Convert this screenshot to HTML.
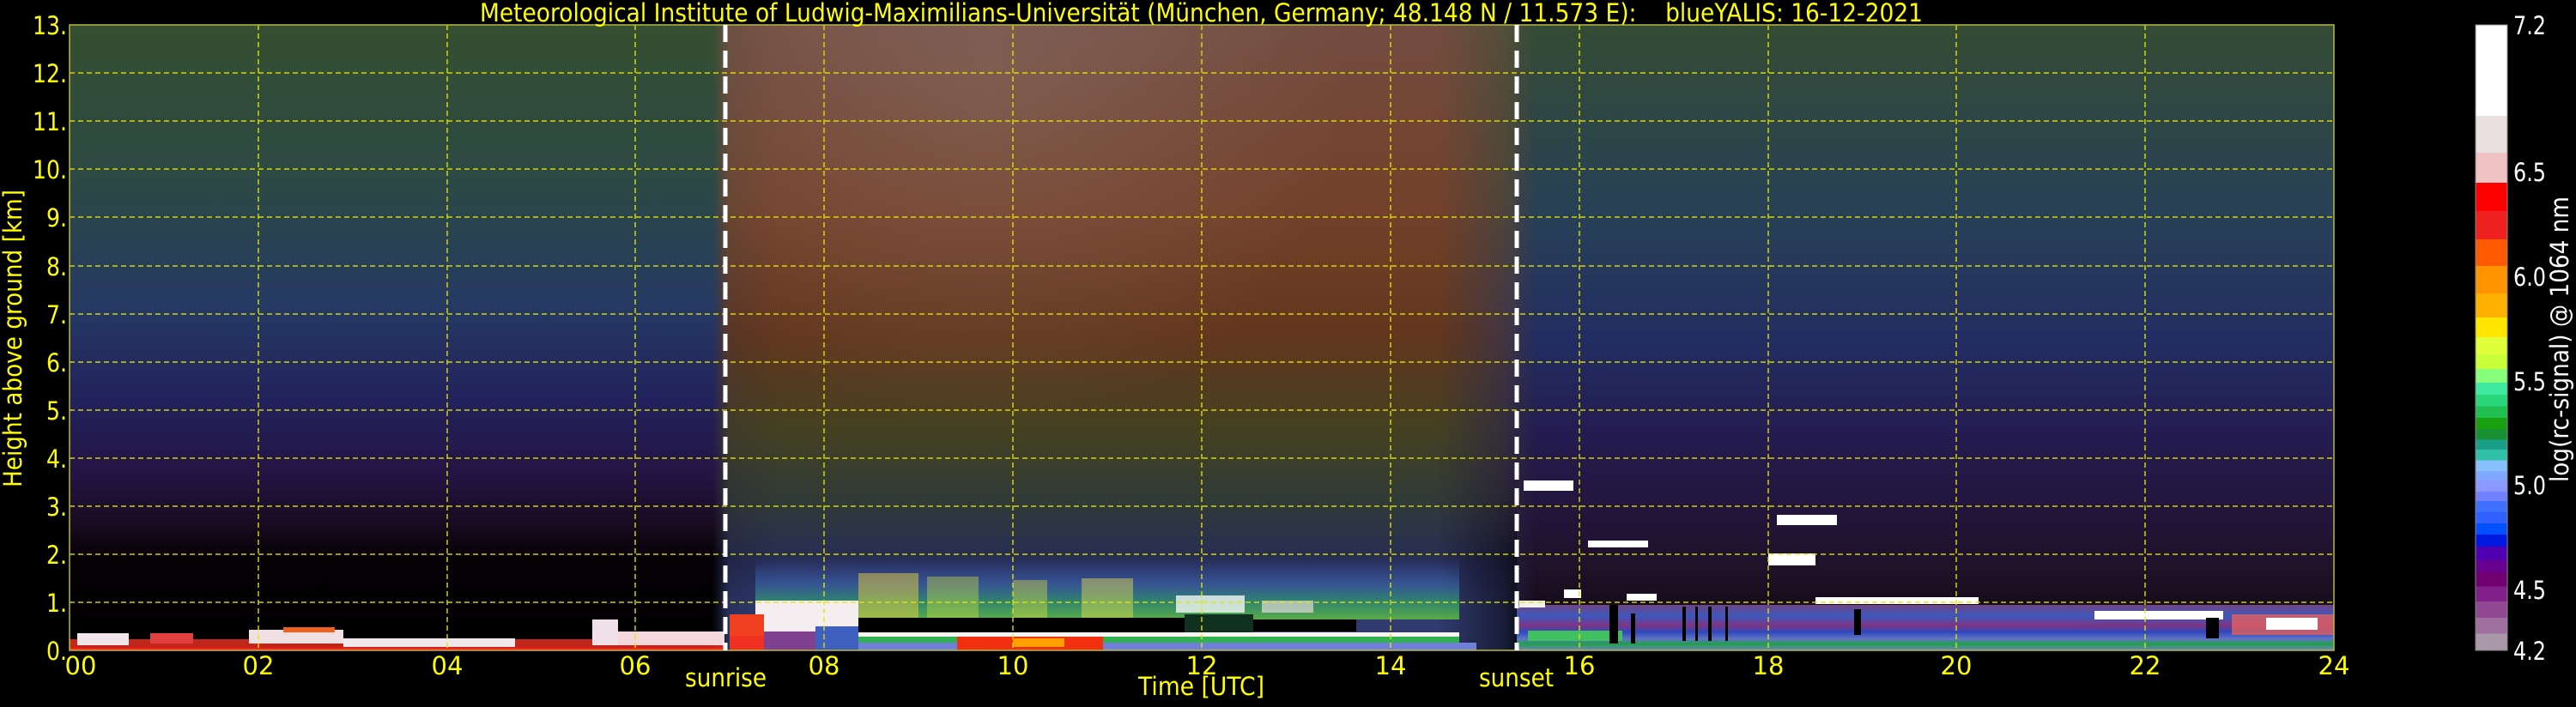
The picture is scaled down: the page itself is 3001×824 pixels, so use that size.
<!DOCTYPE html>
<html><head><meta charset="utf-8"><style>
html,body{margin:0;padding:0;background:#000;width:3001px;height:824px;overflow:hidden}
svg{display:block}
text{font-family:"DejaVu Sans","Liberation Sans",sans-serif}
</style></head><body>
<svg width="3001" height="824" viewBox="0 0 3001 824" xmlns="http://www.w3.org/2000/svg">
<defs>
<linearGradient id="night" x1="0" y1="29" x2="0" y2="758" gradientUnits="userSpaceOnUse">
<stop offset="0" stop-color="#4a6e44"/>
<stop offset="0.25" stop-color="#3e6660"/>
<stop offset="0.45" stop-color="#34508a"/>
<stop offset="0.6" stop-color="#303080"/>
<stop offset="0.72" stop-color="#321c5e"/>
<stop offset="0.8" stop-color="#22102c"/>
<stop offset="0.85" stop-color="#070307"/>
<stop offset="1" stop-color="#000"/>
</linearGradient>
<linearGradient id="nightR" x1="0" y1="29" x2="0" y2="758" gradientUnits="userSpaceOnUse">
<stop offset="0" stop-color="#486a48"/>
<stop offset="0.3" stop-color="#385a78"/>
<stop offset="0.5" stop-color="#304088"/>
<stop offset="0.65" stop-color="#322872"/>
<stop offset="0.78" stop-color="#301e52"/>
<stop offset="0.88" stop-color="#2a1836"/>
<stop offset="0.93" stop-color="#1e1024"/>
<stop offset="1" stop-color="#140a14"/>
</linearGradient>
<linearGradient id="day" x1="0" y1="29" x2="0" y2="758" gradientUnits="userSpaceOnUse">
<stop offset="0" stop-color="#a06a5a"/>
<stop offset="0.3" stop-color="#a05a3a"/>
<stop offset="0.5" stop-color="#884c28"/>
<stop offset="0.65" stop-color="#5e5a30"/>
<stop offset="0.76" stop-color="#44524c"/>
<stop offset="0.86" stop-color="#363e78"/>
<stop offset="0.93" stop-color="#44529a"/>
<stop offset="1" stop-color="#44529a"/>
</linearGradient>
<linearGradient id="dayMaskG" x1="830" y1="0" x2="1790" y2="0" gradientUnits="userSpaceOnUse">
<stop offset="0" stop-color="#fff" stop-opacity="0"/>
<stop offset="0.02" stop-color="#fff" stop-opacity="0.85"/>
<stop offset="0.08" stop-color="#fff" stop-opacity="1"/>
<stop offset="0.88" stop-color="#fff" stop-opacity="1"/>
<stop offset="0.96" stop-color="#fff" stop-opacity="0.5"/>
<stop offset="1" stop-color="#fff" stop-opacity="0"/>
</linearGradient>
<mask id="dayMask" maskUnits="userSpaceOnUse" x="0" y="0" width="3001" height="824">
<rect x="830" y="29" width="960" height="729" fill="url(#dayMaskG)"/>
</mask>
<radialGradient id="whiteTop" cx="1150" cy="80" r="420" gradientUnits="userSpaceOnUse">
<stop offset="0" stop-color="#d8c0b8" stop-opacity="0.3"/>
<stop offset="1" stop-color="#d8c0b8" stop-opacity="0"/>
</radialGradient>
<linearGradient id="greenBand" x1="0" y1="650" x2="0" y2="722" gradientUnits="userSpaceOnUse">
<stop offset="0" stop-color="#4060c0" stop-opacity="0"/>
<stop offset="0.4" stop-color="#4070c0" stop-opacity="0.6"/>
<stop offset="0.7" stop-color="#30a070" stop-opacity="0.85"/>
<stop offset="1" stop-color="#60c040"/>
</linearGradient>
<linearGradient id="nightBL" x1="0" y1="705" x2="0" y2="758" gradientUnits="userSpaceOnUse">
<stop offset="0" stop-color="#7a4a90"/>
<stop offset="0.25" stop-color="#4060d0"/>
<stop offset="0.45" stop-color="#8a3a90"/>
<stop offset="0.6" stop-color="#3050d0"/>
<stop offset="0.75" stop-color="#6a80d8"/>
<stop offset="0.86" stop-color="#20b050"/>
<stop offset="1" stop-color="#8090e0"/>
</linearGradient>
<linearGradient id="cbar" x1="0" y1="29" x2="0" y2="758" gradientUnits="userSpaceOnUse">
<stop offset="0" stop-color="#ffffff"/><stop offset="0.1454" stop-color="#ffffff"/>
<stop offset="0.1454" stop-color="#ebe0e0"/><stop offset="0.2044" stop-color="#ebe0e0"/>
<stop offset="0.2044" stop-color="#efc3c3"/><stop offset="0.2524" stop-color="#efc3c3"/>
<stop offset="0.2524" stop-color="#ff0000"/><stop offset="0.2977" stop-color="#ff0000"/>
<stop offset="0.2977" stop-color="#ef2020"/><stop offset="0.3429" stop-color="#ef2020"/>
<stop offset="0.3429" stop-color="#ff5a00"/><stop offset="0.3855" stop-color="#ff5a00"/>
<stop offset="0.3855" stop-color="#ff9400"/><stop offset="0.4294" stop-color="#ff9400"/>
<stop offset="0.4294" stop-color="#ffb000"/><stop offset="0.4678" stop-color="#ffb000"/>
<stop offset="0.4678" stop-color="#ffe600"/><stop offset="0.4993" stop-color="#ffe600"/>
<stop offset="0.4993" stop-color="#dfff3a"/><stop offset="0.5267" stop-color="#dfff3a"/>
<stop offset="0.5267" stop-color="#c8ff3a"/><stop offset="0.55" stop-color="#c8ff3a"/>
<stop offset="0.55" stop-color="#88ff7a"/><stop offset="0.572" stop-color="#88ff7a"/>
<stop offset="0.572" stop-color="#40e8a0"/><stop offset="0.591" stop-color="#40e8a0"/>
<stop offset="0.591" stop-color="#2ad67a"/><stop offset="0.610" stop-color="#2ad67a"/>
<stop offset="0.610" stop-color="#1fc050"/><stop offset="0.628" stop-color="#1fc050"/>
<stop offset="0.628" stop-color="#18a010"/><stop offset="0.646" stop-color="#18a010"/>
<stop offset="0.646" stop-color="#169030"/><stop offset="0.663" stop-color="#169030"/>
<stop offset="0.663" stop-color="#1aa088"/><stop offset="0.679" stop-color="#1aa088"/>
<stop offset="0.679" stop-color="#30c0a8"/><stop offset="0.696" stop-color="#30c0a8"/>
<stop offset="0.696" stop-color="#88c0ff"/><stop offset="0.713" stop-color="#88c0ff"/>
<stop offset="0.713" stop-color="#80a8ff"/><stop offset="0.728" stop-color="#80a8ff"/>
<stop offset="0.728" stop-color="#8a98ff"/><stop offset="0.746" stop-color="#8a98ff"/>
<stop offset="0.746" stop-color="#7080ff"/><stop offset="0.761" stop-color="#7080ff"/>
<stop offset="0.761" stop-color="#4070ff"/><stop offset="0.779" stop-color="#4070ff"/>
<stop offset="0.779" stop-color="#3060ff"/><stop offset="0.797" stop-color="#3060ff"/>
<stop offset="0.797" stop-color="#0050ff"/><stop offset="0.815" stop-color="#0050ff"/>
<stop offset="0.815" stop-color="#0018e0"/><stop offset="0.834" stop-color="#0018e0"/>
<stop offset="0.834" stop-color="#5000b0"/><stop offset="0.856" stop-color="#5000b0"/>
<stop offset="0.856" stop-color="#680090"/><stop offset="0.875" stop-color="#680090"/>
<stop offset="0.875" stop-color="#700070"/><stop offset="0.898" stop-color="#700070"/>
<stop offset="0.898" stop-color="#802088"/><stop offset="0.922" stop-color="#802088"/>
<stop offset="0.922" stop-color="#904890"/><stop offset="0.948" stop-color="#904890"/>
<stop offset="0.948" stop-color="#a070a0"/><stop offset="0.973" stop-color="#a070a0"/>
<stop offset="0.973" stop-color="#a898a8"/><stop offset="1" stop-color="#a898a8"/>
</linearGradient>
</defs>

<!-- data area -->
<rect x="81" y="29" width="1700" height="729" fill="url(#night)"/>
<rect x="1767" y="29" width="952" height="729" fill="url(#nightR)"/>
<g mask="url(#dayMask)">
<rect x="830" y="29" width="960" height="729" fill="url(#day)"/>
<rect x="830" y="29" width="960" height="729" fill="url(#whiteTop)"/>
</g>
<rect x="81" y="29" width="2638" height="729" fill="#000" opacity="0.28"/>

<!-- day boundary layer -->
<rect x="880" y="650" width="820" height="72" fill="url(#greenBand)" opacity="0.85"/>
<rect x="1000" y="668" width="70" height="52" fill="#e8d040" opacity="0.5"/>
<rect x="1080" y="672" width="60" height="48" fill="#d0e040" opacity="0.4"/>
<rect x="1180" y="676" width="40" height="44" fill="#e0e040" opacity="0.4"/>
<rect x="1260" y="674" width="60" height="46" fill="#e8e050" opacity="0.45"/>
<rect x="1370" y="694" width="80" height="20" fill="#ffffff" opacity="0.75"/>
<rect x="1470" y="700" width="60" height="14" fill="#f0e0e0" opacity="0.65"/>
<rect x="1000" y="720" width="380" height="17" fill="#000"/>
<rect x="1380" y="716" width="80" height="22" fill="#103020"/>
<rect x="1460" y="722" width="120" height="14" fill="#000"/>
<rect x="880" y="700" width="120" height="37" fill="#f4eef0"/>
<rect x="850" y="716" width="40" height="25" fill="#f04020"/>
<rect x="890" y="736" width="60" height="22" fill="#804090"/>
<rect x="950" y="730" width="50" height="28" fill="#4060c0"/>
<rect x="1000" y="737" width="700" height="5" fill="#f8f4f0"/>
<rect x="1000" y="742" width="700" height="7" fill="#30b050"/>
<rect x="1000" y="749" width="720" height="9" fill="#7080d8"/>
<rect x="1115" y="742" width="170" height="16" fill="#f03010"/>
<rect x="1180" y="744" width="60" height="10" fill="#ffa000"/>
<rect x="850" y="741" width="40" height="17" fill="#f03020"/>

<!-- right night boundary layer -->
<rect x="1767" y="705" width="952" height="53" fill="url(#nightBL)" opacity="0.9"/>
<rect x="1770" y="700" width="30" height="8" fill="#f0f0f0"/>
<rect x="2115" y="696" width="190" height="8" fill="#ffffff"/>
<rect x="2440" y="712" width="150" height="10" fill="#ffffff"/>
<rect x="2600" y="716" width="119" height="24" fill="#e06060" opacity="0.8"/>
<rect x="2640" y="720" width="60" height="14" fill="#ffffff"/>
<rect x="1780" y="735" width="110" height="12" fill="#40c060"/>
<rect x="1875" y="705" width="10" height="45" fill="#000"/>
<rect x="1900" y="715" width="5" height="35" fill="#000"/>
<rect x="1960" y="707" width="4" height="40" fill="#000"/>
<rect x="1975" y="707" width="3" height="40" fill="#000"/>
<rect x="1990" y="707" width="4" height="40" fill="#000"/>
<rect x="2010" y="707" width="3" height="40" fill="#000"/>
<rect x="2160" y="710" width="8" height="30" fill="#000"/>
<rect x="2570" y="720" width="15" height="24" fill="#000"/>

<!-- clouds -->
<rect x="1775" y="560" width="58" height="12" fill="#ffffff"/>
<rect x="1850" y="630" width="70" height="8" fill="#ffffff"/>
<rect x="2070" y="600" width="70" height="12" fill="#ffffff"/>
<rect x="2060" y="645" width="55" height="14" fill="#ffffff"/>
<rect x="1822" y="687" width="20" height="10" fill="#ffffff"/>
<rect x="1895" y="692" width="35" height="8" fill="#ffffff"/>

<!-- left night ground layer -->
<rect x="81" y="745" width="763" height="13" fill="#f03020" opacity="0.8"/>
<rect x="90" y="738" width="60" height="14" fill="#f0e6ea"/>
<rect x="175" y="738" width="50" height="12" fill="#e04040"/>
<rect x="290" y="734" width="110" height="16" fill="#f0e0e4"/>
<rect x="330" y="731" width="60" height="6" fill="#f06020"/>
<rect x="400" y="744" width="200" height="10" fill="#f0e8ea"/>
<rect x="690" y="722" width="30" height="30" fill="#f0e0e8"/>
<rect x="720" y="736" width="124" height="16" fill="#f4d8dc"/>
<rect x="81" y="755" width="763" height="3" fill="#ff2020"/>

<!-- grid -->
<g stroke="#e6e600" stroke-width="1.5" stroke-dasharray="6 4" fill="none" opacity="0.9">
<line x1="81" y1="85" x2="2719" y2="85"/><line x1="81" y1="141" x2="2719" y2="141"/>
<line x1="81" y1="197" x2="2719" y2="197"/><line x1="81" y1="253" x2="2719" y2="253"/>
<line x1="81" y1="310" x2="2719" y2="310"/><line x1="81" y1="366" x2="2719" y2="366"/>
<line x1="81" y1="422" x2="2719" y2="422"/><line x1="81" y1="478" x2="2719" y2="478"/>
<line x1="81" y1="534" x2="2719" y2="534"/><line x1="81" y1="590" x2="2719" y2="590"/>
<line x1="81" y1="646" x2="2719" y2="646"/><line x1="81" y1="702" x2="2719" y2="702"/>
<line x1="301" y1="29" x2="301" y2="758"/><line x1="521" y1="29" x2="521" y2="758"/>
<line x1="740" y1="29" x2="740" y2="758"/><line x1="960" y1="29" x2="960" y2="758"/>
<line x1="1180" y1="29" x2="1180" y2="758"/><line x1="1400" y1="29" x2="1400" y2="758"/>
<line x1="1620" y1="29" x2="1620" y2="758"/><line x1="1840" y1="29" x2="1840" y2="758"/>
<line x1="2060" y1="29" x2="2060" y2="758"/><line x1="2279" y1="29" x2="2279" y2="758"/>
<line x1="2499" y1="29" x2="2499" y2="758"/>
</g>
<rect x="81" y="29" width="2638" height="729" fill="none" stroke="#b8b840" stroke-width="1.5"/>

<!-- sunrise / sunset -->
<g stroke="#ffffff" stroke-width="5" stroke-dasharray="20 10">
<line x1="845" y1="29" x2="845" y2="758"/>
<line x1="1767" y1="29" x2="1767" y2="758"/>
</g>

<!-- text -->
<g fill="#ffff00" font-size="29">
<text x="559" y="25" xml:space="preserve" textLength="1681" lengthAdjust="spacingAndGlyphs">Meteorological Institute of Ludwig-Maximilians-Universität (München, Germany; 48.148 N / 11.573 E):    blueYALIS: 16-12-2021</text>
<g text-anchor="end">
<text x="78" y="40" textLength="40" lengthAdjust="spacingAndGlyphs">13.</text>
<text x="78" y="96" textLength="40" lengthAdjust="spacingAndGlyphs">12.</text>
<text x="78" y="152" textLength="40" lengthAdjust="spacingAndGlyphs">11.</text>
<text x="78" y="208" textLength="40" lengthAdjust="spacingAndGlyphs">10.</text>
<text x="78" y="264" textLength="24" lengthAdjust="spacingAndGlyphs">9.</text>
<text x="78" y="321" textLength="24" lengthAdjust="spacingAndGlyphs">8.</text>
<text x="78" y="377" textLength="24" lengthAdjust="spacingAndGlyphs">7.</text>
<text x="78" y="433" textLength="24" lengthAdjust="spacingAndGlyphs">6.</text>
<text x="78" y="489" textLength="24" lengthAdjust="spacingAndGlyphs">5.</text>
<text x="78" y="545" textLength="24" lengthAdjust="spacingAndGlyphs">4.</text>
<text x="78" y="601" textLength="24" lengthAdjust="spacingAndGlyphs">3.</text>
<text x="78" y="657" textLength="24" lengthAdjust="spacingAndGlyphs">2.</text>
<text x="78" y="713" textLength="24" lengthAdjust="spacingAndGlyphs">1.</text>
<text x="78" y="769" textLength="24" lengthAdjust="spacingAndGlyphs">0.</text>
</g>
<g text-anchor="middle">
<text x="94" y="786">00</text><text x="301" y="786">02</text><text x="521" y="786">04</text>
<text x="740" y="786">06</text><text x="960" y="786">08</text><text x="1180" y="786">10</text>
<text x="1400" y="786">12</text><text x="1620" y="786">14</text><text x="1840" y="786">16</text>
<text x="2060" y="786">18</text><text x="2279" y="786">20</text><text x="2499" y="786">22</text>
<text x="2719" y="786">24</text>
</g>
<text x="798" y="800" textLength="95" lengthAdjust="spacingAndGlyphs">sunrise</text>
<text x="1723" y="800" textLength="87" lengthAdjust="spacingAndGlyphs">sunset</text>
<text x="1326" y="810" textLength="147" lengthAdjust="spacingAndGlyphs">Time [UTC]</text>
<text transform="translate(25,568) rotate(-90)" x="0" y="0" textLength="347" lengthAdjust="spacingAndGlyphs">Height above ground [km]</text>
</g>

<!-- colorbar -->
<rect x="2884" y="29" width="37" height="729" fill="url(#cbar)" stroke="#888" stroke-width="1"/>
<g fill="#ffffff" font-size="29">
<text x="2928" y="40" textLength="38" lengthAdjust="spacingAndGlyphs">7.2</text>
<text x="2928" y="211" textLength="38" lengthAdjust="spacingAndGlyphs">6.5</text>
<text x="2928" y="333" textLength="38" lengthAdjust="spacingAndGlyphs">6.0</text>
<text x="2928" y="455" textLength="38" lengthAdjust="spacingAndGlyphs">5.5</text>
<text x="2928" y="576" textLength="38" lengthAdjust="spacingAndGlyphs">5.0</text>
<text x="2928" y="698" textLength="38" lengthAdjust="spacingAndGlyphs">4.5</text>
<text x="2928" y="769" textLength="38" lengthAdjust="spacingAndGlyphs">4.2</text>
<text transform="translate(2992,562) rotate(-90)" x="0" y="0" textLength="333" lengthAdjust="spacingAndGlyphs">log(rc-signal) @ 1064 nm</text>
</g>
</svg>
</body></html>
